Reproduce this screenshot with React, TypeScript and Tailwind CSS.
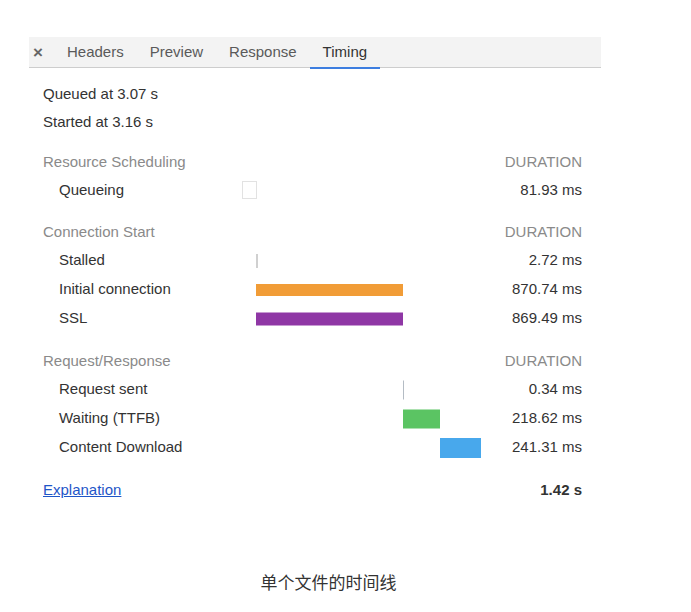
import React from "react";

type Bar = {
  label: string;
  kind: "box" | "line" | "bar";
  start: number;
  dur: number;
  h: number;
  color?: string;
  text: string;
  minW?: number;
};

type Section = { title: string; rowH: string; rows: Bar[] };

const SCALE = 239 / 1420;

const sections: Section[] = [
  {
    title: "Resource Scheduling",
    rowH: "h-[28px]",
    rows: [{ label: "Queueing", kind: "box", start: 0, dur: 81.93, h: 18, text: "81.93 ms", minW: 15 }],
  },
  {
    title: "Connection Start",
    rowH: "h-[29px]",
    rows: [
      { label: "Stalled", kind: "line", start: 81.93, dur: 2.72, h: 14, color: "#d0d0d0", text: "2.72 ms", minW: 2 },
      { label: "Initial connection", kind: "bar", start: 84.65, dur: 870.74, h: 12, color: "#f19c37", text: "870.74 ms" },
      { label: "SSL", kind: "bar", start: 84.65, dur: 870.74, h: 13, color: "#8f37a5", text: "869.49 ms" },
    ],
  },
  {
    title: "Request/Response",
    rowH: "h-[29px]",
    rows: [
      { label: "Request sent", kind: "line", start: 955.39, dur: 0.34, h: 19, color: "#b4bcc4", text: "0.34 ms", minW: 1 },
      { label: "Waiting (TTFB)", kind: "bar", start: 955.73, dur: 218.62, h: 19, color: "#5bc463", text: "218.62 ms" },
      { label: "Content Download", kind: "bar", start: 1174.35, dur: 241.31, h: 20, color: "#48a8ec", text: "241.31 ms" },
    ],
  },
];

function BarShape({ b }: { b: Bar }) {
  const left = Math.round(b.start * SCALE);
  const width = Math.max(b.minW ?? 1, Math.round(b.dur * SCALE));
  if (b.kind === "box") {
    return (
      <div
        className="absolute top-1/2 -translate-y-1/2 border border-[#e2e2e2] bg-white"
        style={{ left, width, height: b.h }}
      />
    );
  }
  return (
    <div
      className="absolute top-1/2 -translate-y-1/2"
      style={{ left, width, height: b.h, backgroundColor: b.color }}
    />
  );
}

export default function App() {
  const tabs = ["Headers", "Preview", "Response", "Timing"];
  return (
    <div
      className="min-h-[612px] w-[691px] bg-white pl-[29px] pt-[37px] text-[#333]"
      style={{ fontFamily: '"Liberation Sans", Arial, "Noto Sans CJK SC", sans-serif' }}
    >
      <div className="w-[572px]">
        {/* tab bar */}
        <div className="flex h-[31px] items-stretch border-b border-[#cdcdcd] bg-[#f3f3f3] text-[15px]">
          <div className="flex w-[25px] items-center pl-[4px] text-[17px] font-bold leading-none text-[#666]">×</div>
          {tabs.map((t) => (
            <div
              key={t}
              className={
                t === "Timing"
                  ? "relative flex items-center px-[13px] text-[#333]"
                  : "relative flex items-center px-[13px] text-[#5a5a5a]"
              }
            >
              {t}
              {t === "Timing" && <span className="absolute bottom-[-2px] left-0 right-0 h-[2px] bg-[#3d7ee0]" />}
            </div>
          ))}
        </div>

        {/* content */}
        <div className="w-[553px] pl-[14px] pt-[12px] text-[15px]">
          <div className="flex h-[28px] items-center">Queued at 3.07 s</div>
          <div className="flex h-[28px] items-center">Started at 3.16 s</div>

          {sections.map((s, i) => (
            <div key={s.title} className={i === 0 ? "mt-[12px]" : "mt-[14px]"}>
              <div className="flex h-[28px] items-center justify-between text-[#8a8a8a]">
                <span>{s.title}</span>
                <span>DURATION</span>
              </div>
              {s.rows.map((b) => (
                <div key={b.label} className={`flex items-center ${s.rowH}`}>
                  <div className="w-[199px] pl-4">{b.label}</div>
                  <div className="relative h-full w-[239px]">
                    <BarShape b={b} />
                  </div>
                  <div className="flex-1 text-right">{b.text}</div>
                </div>
              ))}
            </div>
          ))}

          <div className="mt-[14px] flex h-[28px] items-center justify-between">
            <span className="text-[#1f56c8] underline">Explanation</span>
            <span className="font-bold">1.42 s</span>
          </div>
        </div>
      </div>

      <div className="mt-[68px] w-[599px] text-center text-[17px] leading-[24px] text-[#333]">
        单个文件的时间线
      </div>
    </div>
  );
}
